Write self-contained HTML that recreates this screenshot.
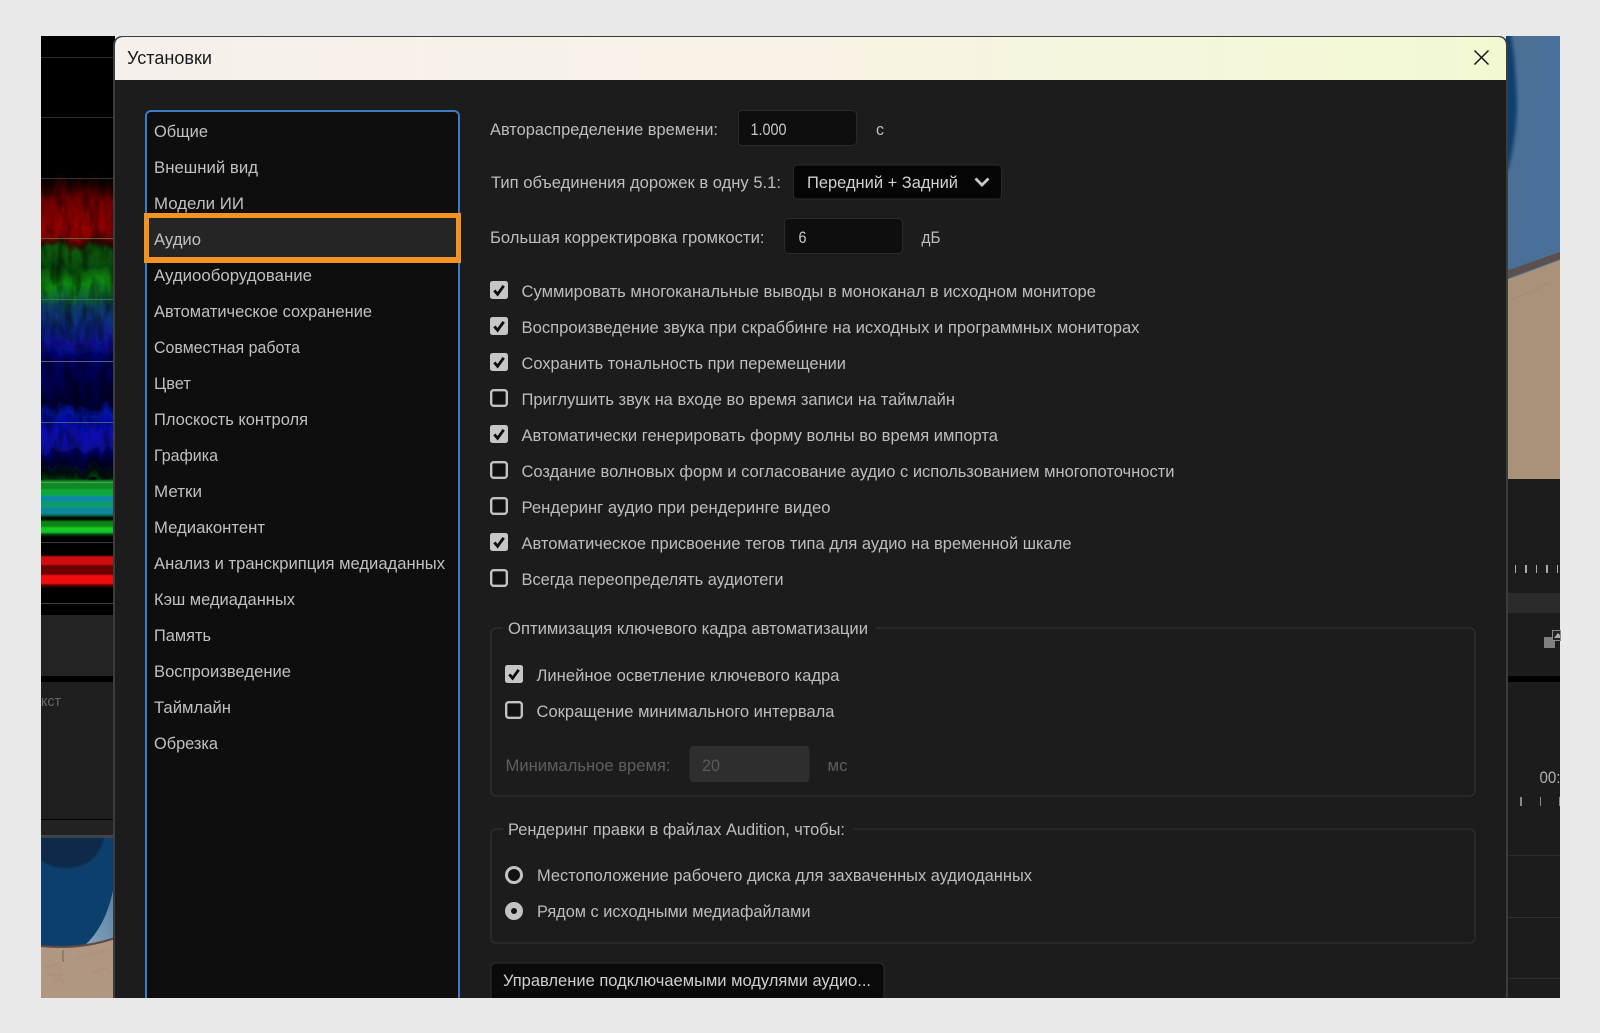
<!DOCTYPE html>
<html lang="ru"><head><meta charset="utf-8"><title>Установки</title>
<style>
html,body{margin:0;padding:0;background:#e9e9e9;width:1600px;height:1033px;overflow:hidden}
svg{display:block}
text{font-family:"Liberation Sans","Noto Sans CJK SC",sans-serif;font-size:17px;fill:#bdbdbd}
.l text{fill:#c0c0c0}
</style></head><body>
<svg width="1600" height="1033" viewBox="0 0 1600 1033" xmlns="http://www.w3.org/2000/svg">
<defs>
<linearGradient id="tb" x1="0" x2="1" y1="0" y2="0"><stop offset="0" stop-color="#f6f0ec"/><stop offset=".5" stop-color="#f8f3e6"/><stop offset="1" stop-color="#f2f9d2"/></linearGradient>
<linearGradient id="sky" x1="0" x2="1" y1="0" y2="1"><stop offset="0" stop-color="#4f6f92"/><stop offset=".5" stop-color="#47709a"/><stop offset="1" stop-color="#4b7299"/></linearGradient>
<linearGradient id="wedge" x1="0" x2="1" y1="1" y2="0"><stop offset="0" stop-color="#8aa6bd"/><stop offset="1" stop-color="#4f7da3"/></linearGradient>
<linearGradient id="spec" gradientUnits="userSpaceOnUse" x1="0" x2="0" y1="150" y2="480">
<stop offset="0" stop-color="#000"/><stop offset=".08" stop-color="#000"/>
<stop offset=".115" stop-color="#300000"/><stop offset=".15" stop-color="#700000"/>
<stop offset=".2" stop-color="#860000"/><stop offset=".235" stop-color="#940404"/>
<stop offset=".27" stop-color="#840000"/><stop offset=".28" stop-color="#3a0800"/>
<stop offset=".3" stop-color="#0a5a0a"/><stop offset=".355" stop-color="#064a0a"/>
<stop offset=".403" stop-color="#0a8a10"/><stop offset=".445" stop-color="#0a6a30"/>
<stop offset=".475" stop-color="#0a3c60"/><stop offset=".525" stop-color="#0a3080"/>
<stop offset=".585" stop-color="#0a1094"/><stop offset=".636" stop-color="#000060"/>
<stop offset=".706" stop-color="#00004a"/><stop offset=".77" stop-color="#000030"/>
<stop offset=".8" stop-color="#0014a0"/><stop offset=".855" stop-color="#0808b4"/>
<stop offset=".9" stop-color="#0a0aa0"/><stop offset=".94" stop-color="#000040"/>
<stop offset=".98" stop-color="#00100a"/><stop offset="1" stop-color="#043a10"/>
</linearGradient>
<filter id="rag" filterUnits="userSpaceOnUse" x="20" y="140" width="120" height="360"><feTurbulence type="fractalNoise" baseFrequency="0.09 0.03" numOctaves="3" seed="7"/><feDisplacementMap in="SourceGraphic" scale="18" xChannelSelector="R" yChannelSelector="G"/><feGaussianBlur stdDeviation="0.6"/></filter>
<filter id="dark" filterUnits="userSpaceOnUse" x="41" y="172" width="74" height="310"><feTurbulence type="fractalNoise" baseFrequency="0.11 0.035" numOctaves="3" seed="11"/><feColorMatrix type="matrix" values="0 0 0 0 0  0 0 0 0 0  0 0 0 0 0  2.6 0 0 0 -1"/></filter>
<filter id="b1"><feGaussianBlur stdDeviation="0.8"/></filter>
<filter id="b2"><feGaussianBlur stdDeviation="1.6"/></filter>
<clipPath id="cl"><rect x="41" y="36" width="74" height="962"/></clipPath>
<clipPath id="cr"><rect x="1506" y="36" width="54" height="443"/></clipPath>
<g id="cb"><rect width="18" height="18" rx="2.5" fill="#c6c6c6"/><path d="M4.3 9.4 7.6 13.2 13.7 4.8" fill="none" stroke="#0c0c0c" stroke-width="2.8"/></g>
<g id="ub"><rect x="1.2" y="1.2" width="15.6" height="15.6" rx="2.5" fill="#111" stroke="#c2c2c2" stroke-width="2.4"/></g>
</defs>
<rect width="1600" height="1033" fill="#e9e9e9"/>

<!-- left background strip -->
<rect x="41" y="36" width="74" height="580" fill="#000"/>
<g clip-path="url(#cl)">
<g filter="url(#rag)"><rect x="20" y="140" width="120" height="342" fill="url(#spec)"/></g>
<rect x="41" y="172" width="74" height="310" filter="url(#dark)" opacity=".45"/>
<g filter="url(#b1)">
<rect x="30" y="480" width="100" height="9" fill="#0a8a20"/>
<rect x="30" y="489" width="100" height="7" fill="#10a838"/>
<rect x="30" y="496" width="100" height="5" fill="#1088a8"/>
<rect x="30" y="501" width="100" height="7" fill="#109a70"/>
<rect x="30" y="508" width="100" height="6" fill="#0c86a0"/>
<rect x="30" y="514" width="100" height="2" fill="#0a6a50"/>
<rect x="30" y="516" width="100" height="5" fill="#041004"/>
<rect x="30" y="521" width="100" height="6" fill="#0a8418"/>
<rect x="30" y="527" width="100" height="6" fill="#12c828"/>
<rect x="30" y="533" width="100" height="3" fill="#063a08"/>
<rect x="30" y="556" width="100" height="9" fill="#d00808"/>
<rect x="30" y="565" width="100" height="10" fill="#6a0000"/>
<rect x="30" y="575" width="100" height="9" fill="#f00808"/>
<rect x="30" y="584" width="100" height="3" fill="#500000"/>
</g>
</g>
<g fill="#2a2a2a">
<rect x="41" y="57" width="74" height="1"/><rect x="41" y="117" width="74" height="1"/><rect x="41" y="178" width="74" height="1" fill="#3a2e2e"/><rect x="41" y="238" width="74" height="1" fill="#6a5c34"/><rect x="41" y="299" width="74" height="1" fill="#3c6a5c"/><rect x="41" y="361" width="74" height="1" fill="#5a5a7a"/><rect x="41" y="422" width="74" height="1" fill="#50508c"/><rect x="41" y="482" width="74" height="1" fill="#5a9a5a"/><rect x="41" y="542" width="74" height="1" fill="#383838"/><rect x="41" y="603" width="74" height="1" fill="#3c3c3c"/>
</g>
<rect x="41" y="615" width="74" height="61" fill="#232323"/>
<rect x="41" y="676" width="74" height="6" fill="#000"/>
<rect x="41" y="682" width="74" height="137" fill="#1e1e1e"/>
<rect x="41" y="819" width="74" height="1" fill="#050505"/>
<rect x="41" y="820" width="74" height="15" fill="#222"/>
<rect x="41" y="835" width="74" height="3" fill="#444"/>
<rect x="41" y="838" width="74" height="110" fill="#0c3f6c"/>
<path d="M41 838H104Q96 868 66 868 50 868 41 860Z" fill="#0c2c48" filter="url(#b1)" clip-path="url(#cl)"/>
<path d="M115 880V940L84 946Q108 925 115 880Z" fill="url(#wedge)"/>
<path d="M41 946Q80 950 115 938V998H41Z" fill="#b09781"/>
<path d="M41 946Q80 950 115 938" fill="none" stroke="#5e4a44" stroke-width="2"/>
<g fill="none" stroke="#b07a66" stroke-width=".8" opacity=".55" filter="url(#b1)"><path d="M44 968 56 965 62 972M46 975H64M52 983 60 978 66 985M92 973 104 968 110 972M75 958 94 953 110 950"/></g>
<path d="M63 950V962" stroke="#6a4a40" stroke-width="1" opacity=".7"/>
<text x="41" y="706" textLength="20" lengthAdjust="spacingAndGlyphs" style="font-size:15px;fill:#666">кст</text>

<!-- right background strip -->
<g clip-path="url(#cr)">
<rect x="1506" y="36" width="54" height="443" fill="url(#sky)"/>
<path d="M1500 30H1510Q1516 60 1517 107 1516 140 1508 170L1500 175Z" fill="#0f3f70" filter="url(#b2)"/>
<path d="M1506 280 1560 260V479H1506Z" fill="#aa9279"/>
<path d="M1506 271 1560 252V259L1506 279Z" fill="#5c504e"/>
<path d="M1510 300 1535 290 1550 282" stroke="#9a8570" fill="none" opacity=".5"/>
</g>
<rect x="1506" y="479" width="54" height="519" fill="#1c1c1c"/>
<g fill="#aaa"><rect x="1515" y="565" width="1" height="8"/><rect x="1525" y="565" width="2" height="8"/><rect x="1536" y="565" width="1" height="8"/><rect x="1546" y="565" width="2" height="8"/><rect x="1557" y="565" width="1" height="8"/></g>
<rect x="1506" y="593" width="54" height="20" fill="#2b2b2b"/>
<rect x="1544" y="637" width="11" height="11" fill="#808080"/>
<rect x="1552.5" y="630.5" width="8" height="10" fill="#222" stroke="#8a8a8a"/>
<path d="M1554 638 1558 633 1560 635V638Z" fill="#aaa"/>
<rect x="1506" y="676" width="54" height="6" fill="#000"/>
<text x="1539.5" y="783" textLength="21" lengthAdjust="spacingAndGlyphs" style="font-size:17px;fill:#b0b0b0">00:</text>
<g fill="#888"><rect x="1520" y="797" width="2" height="9"/><rect x="1540" y="797" width="1" height="9"/><rect x="1559" y="797" width="1" height="9"/></g>
<rect x="1506" y="855" width="54" height="1" fill="#2c2c2c"/>
<rect x="1506" y="917" width="54" height="1" fill="#323232"/>
<rect x="1506" y="978" width="54" height="1" fill="#2e2e2e"/>

<!-- dialog -->
<rect x="113" y="36" width="1395" height="1000" rx="9" fill="#3c3c3c"/>
<rect x="115" y="80" width="1391" height="956" fill="#1c1c1c"/>
<path d="M115 80V46Q115 37 124 37H1497Q1506 37 1506 46V80Z" fill="url(#tb)"/>
<text x="127" y="64" textLength="85" lengthAdjust="spacingAndGlyphs" style="font-size:18px;fill:#1a1a1a">Установки</text>
<path d="M1474.5 50.5 1488.5 64.5M1488.5 50.5 1474.5 64.5" stroke="#151515" stroke-width="1.5" fill="none"/>

<!-- list -->
<rect x="146" y="111" width="313" height="960" rx="5" fill="#0e0e0e" stroke="#3d7cc4" stroke-width="2"/>
<g class="l">
<text x="154" y="137" textLength="54" lengthAdjust="spacingAndGlyphs">Общие</text>
<text x="154" y="173" textLength="104" lengthAdjust="spacingAndGlyphs">Внешний вид</text>
<text x="154" y="209" textLength="90" lengthAdjust="spacingAndGlyphs">Модели ИИ</text>
</g>
<rect x="146.5" y="215.5" width="312" height="45" fill="#252525" stroke="#f29423" stroke-width="5"/>
<rect x="144" y="257" width="317" height="6" fill="#f29423"/>
<g class="l">
<text x="154" y="245" textLength="47" lengthAdjust="spacingAndGlyphs">Аудио</text>
<text x="154" y="281" textLength="158" lengthAdjust="spacingAndGlyphs">Аудиооборудование</text>
<text x="154" y="317" textLength="218" lengthAdjust="spacingAndGlyphs">Автоматическое сохранение</text>
<text x="154" y="353" textLength="146" lengthAdjust="spacingAndGlyphs">Совместная работа</text>
<text x="154" y="389" textLength="37" lengthAdjust="spacingAndGlyphs">Цвет</text>
<text x="154" y="425" textLength="154" lengthAdjust="spacingAndGlyphs">Плоскость контроля</text>
<text x="154" y="461" textLength="64" lengthAdjust="spacingAndGlyphs">Графика</text>
<text x="154" y="497" textLength="48" lengthAdjust="spacingAndGlyphs">Метки</text>
<text x="154" y="533" textLength="111" lengthAdjust="spacingAndGlyphs">Медиаконтент</text>
<text x="154" y="569" textLength="291" lengthAdjust="spacingAndGlyphs">Анализ и транскрипция медиаданных</text>
<text x="154" y="605" textLength="141" lengthAdjust="spacingAndGlyphs">Кэш медиаданных</text>
<text x="154" y="641" textLength="57" lengthAdjust="spacingAndGlyphs">Память</text>
<text x="154" y="677" textLength="137" lengthAdjust="spacingAndGlyphs">Воспроизведение</text>
<text x="154" y="713" textLength="77" lengthAdjust="spacingAndGlyphs">Таймлайн</text>
<text x="154" y="749" textLength="64" lengthAdjust="spacingAndGlyphs">Обрезка</text>
</g>

<!-- top fields -->
<text x="490" y="135" textLength="228" lengthAdjust="spacingAndGlyphs">Автораспределение времени:</text>
<rect x="738.5" y="110.5" width="118" height="35" rx="4" fill="#0e0e0e" stroke="#2a2a2a"/>
<text x="750.5" y="135" textLength="36" lengthAdjust="spacingAndGlyphs" style="fill:#c8c8c8">1.000</text>
<text x="876" y="135" textLength="8" lengthAdjust="spacingAndGlyphs">с</text>
<text x="491" y="188" textLength="290" lengthAdjust="spacingAndGlyphs">Тип объединения дорожек в одну 5.1:</text>
<rect x="793.5" y="165" width="208" height="34" rx="4" fill="#050505" stroke="#2a2a2a"/>
<text x="807" y="188" textLength="151" lengthAdjust="spacingAndGlyphs" style="fill:#d0d0d0">Передний + Задний</text>
<path d="M975.5 178.5 982 185 988.5 178.5" fill="none" stroke="#c8c8c8" stroke-width="2.8"/>
<text x="490" y="243" textLength="274.5" lengthAdjust="spacingAndGlyphs">Большая корректировка громкости:</text>
<rect x="784.5" y="218.5" width="118" height="35" rx="4" fill="#0e0e0e" stroke="#2a2a2a"/>
<text x="798.5" y="243" textLength="8" lengthAdjust="spacingAndGlyphs" style="fill:#c8c8c8">6</text>
<text x="921.5" y="243" textLength="19" lengthAdjust="spacingAndGlyphs">дБ</text>

<!-- checkboxes -->
<use href="#cb" x="490" y="281"/><text x="521.5" y="297" textLength="574.5" lengthAdjust="spacingAndGlyphs">Суммировать многоканальные выводы в моноканал в исходном мониторе</text>
<use href="#cb" x="490" y="317"/><text x="521.5" y="333" textLength="618" lengthAdjust="spacingAndGlyphs">Воспроизведение звука при скраббинге на исходных и программных мониторах</text>
<use href="#cb" x="490" y="353"/><text x="521.5" y="369" textLength="324.5" lengthAdjust="spacingAndGlyphs">Сохранить тональность при перемещении</text>
<use href="#ub" x="490" y="389"/><text x="521.5" y="405" textLength="433.5" lengthAdjust="spacingAndGlyphs">Приглушить звук на входе во время записи на таймлайн</text>
<use href="#cb" x="490" y="425"/><text x="521.5" y="441" textLength="476.5" lengthAdjust="spacingAndGlyphs">Автоматически генерировать форму волны во время импорта</text>
<use href="#ub" x="490" y="461"/><text x="521.5" y="477" textLength="653" lengthAdjust="spacingAndGlyphs">Создание волновых форм и согласование аудио с использованием многопоточности</text>
<use href="#ub" x="490" y="497"/><text x="521.5" y="513" textLength="309" lengthAdjust="spacingAndGlyphs">Рендеринг аудио при рендеринге видео</text>
<use href="#cb" x="490" y="533"/><text x="521.5" y="549" textLength="550" lengthAdjust="spacingAndGlyphs">Автоматическое присвоение тегов типа для аудио на временной шкале</text>
<use href="#ub" x="490" y="569"/><text x="521.5" y="585" textLength="262" lengthAdjust="spacingAndGlyphs">Всегда переопределять аудиотеги</text>

<!-- group 1 -->
<path d="M503 628H497Q491 628 491 634V790Q491 796 497 796H1469Q1475 796 1475 790V634Q1475 628 1469 628H876" fill="none" stroke="#2c2c2c" stroke-width="1.5"/>
<text x="508" y="634" textLength="360" lengthAdjust="spacingAndGlyphs">Оптимизация ключевого кадра автоматизации</text>
<use href="#cb" x="505" y="665"/><text x="536.5" y="681" textLength="303" lengthAdjust="spacingAndGlyphs">Линейное осветление ключевого кадра</text>
<use href="#ub" x="505" y="701"/><text x="536.5" y="717" textLength="298" lengthAdjust="spacingAndGlyphs">Сокращение минимального интервала</text>
<text x="505.5" y="771" textLength="165" lengthAdjust="spacingAndGlyphs" style="fill:#5e5e5e">Минимальное время:</text>
<rect x="689.5" y="746" width="120" height="36" rx="4" fill="#2e2e2e"/>
<text x="702" y="771" textLength="18" lengthAdjust="spacingAndGlyphs" style="fill:#5a5a5a">20</text>
<text x="827.5" y="771" textLength="20" lengthAdjust="spacingAndGlyphs" style="fill:#5e5e5e">мс</text>

<!-- group 2 -->
<path d="M503 829H497Q491 829 491 835V937Q491 943 497 943H1469Q1475 943 1475 937V835Q1475 829 1469 829H853" fill="none" stroke="#2c2c2c" stroke-width="1.5"/>
<text x="508" y="835" textLength="337" lengthAdjust="spacingAndGlyphs">Рендеринг правки в файлах Audition, чтобы:</text>
<circle cx="514" cy="875" r="7.5" fill="#111" stroke="#c2c2c2" stroke-width="3"/>
<text x="537" y="881" textLength="495" lengthAdjust="spacingAndGlyphs">Местоположение рабочего диска для захваченных аудиоданных</text>
<circle cx="514" cy="911" r="9" fill="#c2c2c2"/><circle cx="514" cy="911" r="3" fill="#111"/>
<text x="537" y="917" textLength="273.5" lengthAdjust="spacingAndGlyphs">Рядом с исходными медиафайлами</text>
<rect x="491" y="963" width="393" height="40" rx="5" fill="#0a0a0a" stroke="#2e2e2e"/>
<text x="503" y="986" textLength="368" lengthAdjust="spacingAndGlyphs" style="fill:#cfcfcf">Управление подключаемыми модулями аудио...</text>

<rect x="0" y="998" width="1600" height="35" fill="#e9e9e9"/>
</svg>
</body></html>
